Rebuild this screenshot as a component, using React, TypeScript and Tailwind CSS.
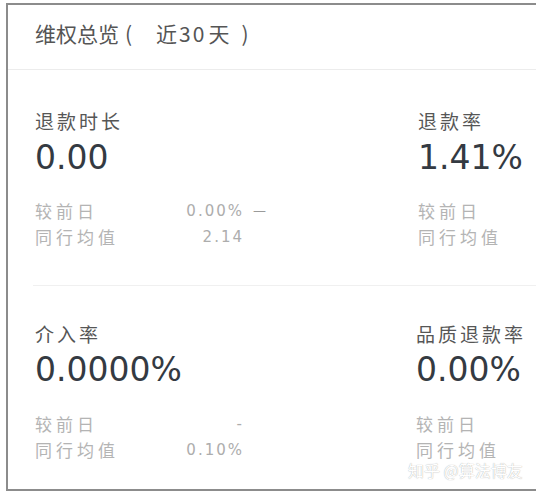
import React from "react";

const cjk = { fontFamily: '"Noto Sans CJK SC", "Noto Sans", sans-serif' };
const num = { fontFamily: '"DejaVu Sans", "Noto Sans CJK SC", sans-serif' };

type Sub = { label: string; value: string; trend?: boolean };

function SubRow({ s }: { s: Sub }) {
  return (
    <div className="flex items-center h-[26px]">
      <div className="flex w-[209px] justify-between items-center">
        <span style={cjk} className="text-[17px] tracking-[4px] text-[#b4b4b4] leading-[20px]">
          {s.label}
        </span>
        <span style={num} className="text-[15px] tracking-[2px] text-[#adadad] leading-[20px]">
          {s.value}
        </span>
      </div>
      {s.trend && (
        <span style={num} className="ml-[9px] text-[13px] text-[#9a9a9a] leading-[20px]">
          —
        </span>
      )}
    </div>
  );
}

function Metric({
  label,
  value,
  subs,
  gapTop,
  gapSub,
}: {
  label: string;
  value: string;
  subs: Sub[];
  gapTop: string;
  gapSub: string;
}) {
  return (
    <div className="flex flex-col">
      <div style={cjk} className="text-[19px] leading-[24px] tracking-[3px] text-[#565656] whitespace-nowrap">
        {label}
      </div>
      <div style={num} className={`${gapTop} text-[33px] leading-[40px] text-[#343a42] whitespace-nowrap`}>
        {value}
      </div>
      <div className={gapSub}>
        {subs.map((s) => (
          <SubRow key={s.label} s={s} />
        ))}
      </div>
    </div>
  );
}

export default function App() {
  return (
    <div className="w-[536px] h-[493px] bg-white overflow-hidden relative pt-[3px] pl-[6px]">
      <div className="h-[488px] border-l-2 border-t-2 border-b-2 border-[#8c8c8c] flex flex-col bg-white">
        <div
          style={cjk}
          className="h-[65px] pt-[14px] border-b border-[#ececec] pl-[27px] text-[21px] leading-[28px] text-[#555] whitespace-nowrap flex items-baseline"
        >
          <span>维权总览</span>
          <span className="ml-[6px]">(</span>
          <span className="ml-[24px]">近</span>
          <span className="ml-[2px] tracking-[2px]">30</span>
          <span className="ml-[2px]">天</span>
          <span className="ml-[12px]">)</span>
        </div>
        <div className="pl-[27px] pt-[39px] h-[215px] grid grid-cols-[383px_1fr]">
          <Metric
            label="退款时长"
            value="0.00"
            gapTop="mt-[5px]"
            gapSub="mt-[20px]"
            subs={[
              { label: "较前日", value: "0.00%", trend: true },
              { label: "同行均值", value: "2.14" },
            ]}
          />
          <Metric
            label="退款率"
            value="1.41%"
            gapTop="mt-[5px]"
            gapSub="mt-[20px]"
            subs={[
              { label: "较前日", value: "" },
              { label: "同行均值", value: "" },
            ]}
          />
        </div>
        <div className="ml-[25px] border-t border-[#f0f0f0] pl-[2px] pt-[36px] grid grid-cols-[381px_1fr]">
          <Metric
            label="介入率"
            value="0.0000%"
            gapTop="mt-[4px]"
            gapSub="mt-[21px]"
            subs={[
              { label: "较前日", value: "-" },
              { label: "同行均值", value: "0.10%" },
            ]}
          />
          <Metric
            label="品质退款率"
            value="0.00%"
            gapTop="mt-[4px]"
            gapSub="mt-[21px]"
            subs={[
              { label: "较前日", value: "" },
              { label: "同行均值", value: "" },
            ]}
          />
        </div>
      </div>
      <div
        style={cjk}
        className="absolute left-[408px] top-[463px] text-[16px] leading-[14px] whitespace-nowrap text-white [text-shadow:0_0_1px_#9a9a9a]"
      >
        知乎 @算法博友
      </div>
    </div>
  );
}
